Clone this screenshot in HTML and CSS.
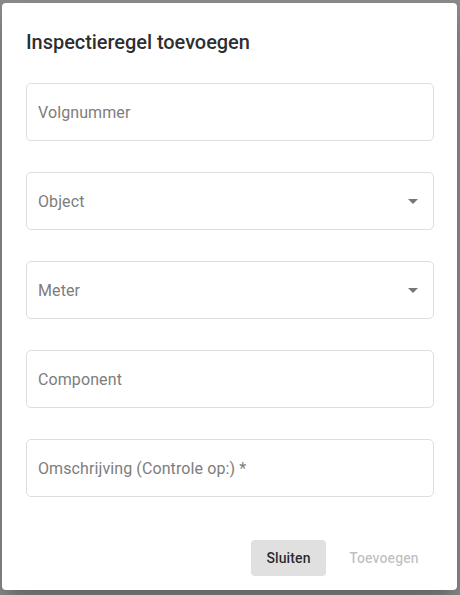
FILE: index.html
```html
<!DOCTYPE html>
<html lang="nl">
<head>
<meta charset="utf-8">
<title>Inspectieregel toevoegen</title>
<link rel="stylesheet" href="styles.css">
</head>
<body>
<div class="dialog" role="dialog">
  <h2 class="dialog-title">Inspectieregel toevoegen</h2>
  <div class="fields">
    <div class="field"><span class="label">Volgnummer</span></div>
    <div class="field select"><span class="label">Object</span>
      <svg class="arrow" viewBox="0 0 24 24" width="24" height="24"><path d="M7 10l5 5 5-5z"/></svg>
    </div>
    <div class="field select"><span class="label">Meter</span>
      <svg class="arrow" viewBox="0 0 24 24" width="24" height="24"><path d="M7 10l5 5 5-5z"/></svg>
    </div>
    <div class="field"><span class="label">Component</span></div>
    <div class="field"><span class="label">Omschrijving (Controle op:) *</span></div>
  </div>
  <div class="actions">
    <button class="btn btn-close">Sluiten</button>
    <button class="btn btn-add" disabled>Toevoegen</button>
  </div>
</div>
</body>
</html>
```

FILE: styles.css
```css
html, body {
  margin: 0;
  padding: 0;
}
body {
  background: #8a8a8a;
  font-family: Roboto, "Liberation Sans", Arial, sans-serif;
  padding: 3px 3px 0 2px;
  height: 595px;
  box-sizing: border-box;
  overflow: hidden;
}
.dialog {
  width: 455px;
  height: 587px;
  background: #fff;
  border-radius: 4px;
  box-shadow: 0 11px 15px -7px rgba(0,0,0,0.2), 0 24px 38px 3px rgba(0,0,0,0.14);
  display: flex;
  flex-direction: column;
  box-sizing: border-box;
  padding: 0 24px 14px 24px;
}
.dialog-title {
  margin: 0;
  padding-top: 23px;
  font-size: 20px;
  font-weight: 500;
  line-height: 32px;
  color: rgba(0,0,0,0.84);
  letter-spacing: -0.05px;
}
.fields {
  margin-top: 25px;
  display: flex;
  flex-direction: column;
  gap: 31px;
  width: 408px;
}
.field {
  height: 58px;
  box-sizing: border-box;
  border: 1px solid #dedede;
  border-radius: 5px;
  display: flex;
  align-items: center;
  padding: 0 8px 0 11px;
}
.label {
  flex: 1;
  font-size: 16px;
  color: #7d7d7d;
  letter-spacing: 0.1px;
}
.arrow {
  fill: #777;
  flex: none;
}
.actions {
  margin-top: 43px;
  display: flex;
  justify-content: flex-end;
  gap: 8px;
  width: 408px;
}
.btn {
  height: 36px;
  border: 0;
  border-radius: 4px;
  padding: 0;
  font-family: inherit;
  font-size: 14px;
  font-weight: 500;
  letter-spacing: 0.1px;
  background: transparent;
}
.btn-close {
  background: #e0e0e0;
  color: rgba(0,0,0,0.84);
  width: 75px;
}
.btn-add {
  color: rgba(0,0,0,0.26);
  width: 100px;
}
```
